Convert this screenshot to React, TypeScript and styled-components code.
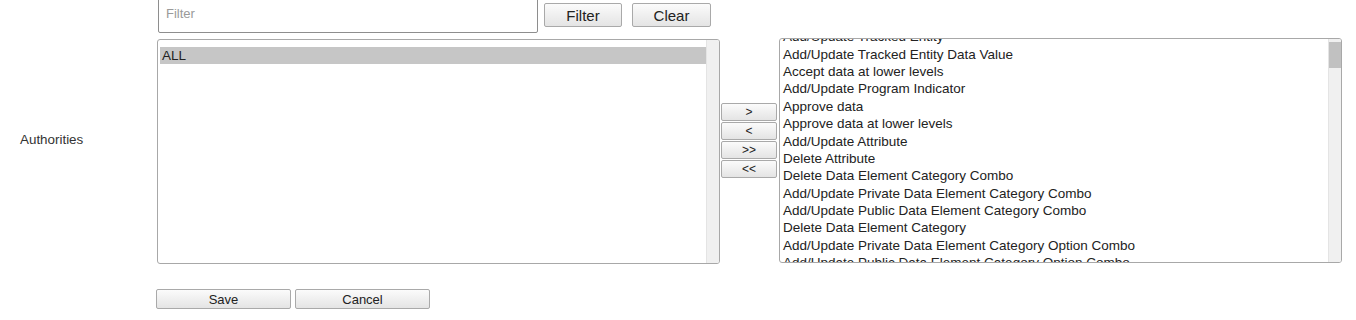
import React, { useLayoutEffect, useRef } from "react";
import styled, { createGlobalStyle } from "styled-components";

const Global = createGlobalStyle`
  html, body { margin: 0; padding: 0; background: #fff; }
  body { font-family: "Liberation Sans", Arial, sans-serif; color: #222; }
`;

const Page = styled.div`
  width: 1356px;
  height: 320px;
  overflow: hidden;
  display: grid;
  grid-template-columns: 157px 1fr;
  grid-template-rows: auto auto auto;
  align-content: start;
`;

const FilterRow = styled.div`
  grid-column: 2;
  display: flex;
  align-items: flex-start;
  margin-top: -4px;
  padding-left: 1px;
`;

const FilterInput = styled.input`
  box-sizing: border-box;
  width: 380px;
  height: 37px;
  border: 1px solid #8e8e8e;
  border-radius: 2px;
  padding: 0 7px 2px;
  font-family: "Liberation Sans", Arial, sans-serif;
  font-size: 13px;
  color: #222;
  outline: none;
  &::placeholder { color: #9a9a9a; }
`;

const GrayButton = styled.button<{ $w: number; $h: number; $fs: number }>`
  box-sizing: border-box;
  width: ${(p) => p.$w}px;
  height: ${(p) => p.$h}px;
  padding: 0;
  border: 1px solid #a9a9a9;
  border-radius: 2px;
  background: linear-gradient(#fbfbfb, #e4e4e4);
  font-family: "Liberation Sans", Arial, sans-serif;
  font-size: ${(p) => p.$fs}px;
  color: #222;
  line-height: 1;
  cursor: pointer;
`;

const TopButtons = styled.div`
  display: flex;
  gap: 10px;
  margin-left: 6px;
  margin-top: 7px;
`;

const Label = styled.div`
  grid-column: 1;
  display: flex;
  align-items: center;
  padding-left: 20px;
  padding-bottom: 19px;
  font-size: 13.4px;
  color: #333;
`;

const TransferRow = styled.div`
  grid-column: 2;
  display: flex;
  align-items: flex-start;
  margin-top: 5px;
`;

const ListBox = styled.div`
  box-sizing: border-box;
  width: 563px;
  height: 225px;
  border: 1px solid #a8a8a8;
  border-radius: 3px;
  display: flex;
  overflow: hidden;
  font-size: 13.5px;
  color: #222;
`;

const LeftBox = styled(ListBox)`
  margin-top: 1px;
`;

const RightBox = styled(ListBox)`
  margin-left: 2px;
`;

const Viewport = styled.div<{ $padTop: number; $padLeft: number }>`
  flex: 1;
  min-width: 0;
  overflow: hidden;
  padding: ${(p) => p.$padTop}px 0 0 ${(p) => p.$padLeft}px;
`;

const Track = styled.div`
  width: 12px;
  flex: none;
  background: #f0f0f0;
  border-left: 1px solid #e4e4e4;
  display: flex;
  flex-direction: column;
  padding-top: 3px;
`;

const Thumb = styled.div`
  height: 26px;
  background: #c1c1c1;
`;

const Item = styled.div<{ $selected?: boolean }>`
  height: 17.36px;
  line-height: 17.36px;
  padding-left: 2px;
  white-space: nowrap;
  overflow: hidden;
  background: ${(p) => (p.$selected ? "#c6c6c6" : "transparent")};
`;

const Arrows = styled.div`
  display: flex;
  flex-direction: column;
  gap: 1px;
  margin-left: 1px;
  margin-top: 65px;
`;

const ActionRow = styled.div`
  grid-column: 2;
  display: flex;
  gap: 4px;
  margin-top: 25px;
  margin-left: -1px;
`;

const visible = [
  "Add/Update Tracked Entity Instance",
  "Add/Update Tracked Entity",
  "Add/Update Tracked Entity Data Value",
  "Accept data at lower levels",
  "Add/Update Program Indicator",
  "Approve data",
  "Approve data at lower levels",
  "Add/Update Attribute",
  "Delete Attribute",
  "Delete Data Element Category Combo",
  "Add/Update Private Data Element Category Combo",
  "Add/Update Public Data Element Category Combo",
  "Delete Data Element Category",
  "Add/Update Private Data Element Category Option Combo",
  "Add/Update Public Data Element Category Option Combo",
];

const objects = [
  "Data Element Category Option",
  "Data Element",
  "Data Element Group",
  "Data Element Group Set",
  "Data Set",
  "Indicator",
  "Indicator Group",
  "Indicator Type",
  "Organisation Unit",
  "Organisation Unit Group",
];

const allItems = [
  ...visible,
  ...objects.flatMap((o) => [
    `Add/Update Private ${o}`,
    `Add/Update Public ${o}`,
    `Delete ${o}`,
  ]),
];

export default function App() {
  const rightRef = useRef<HTMLDivElement>(null);
  useLayoutEffect(() => {
    if (rightRef.current) rightRef.current.scrollTop = 28;
  }, []);

  return (
    <>
      <Global />
      <Page>
        <FilterRow>
          <FilterInput placeholder="Filter" />
          <TopButtons>
            <GrayButton $w={78} $h={24} $fs={15}>Filter</GrayButton>
            <GrayButton $w={79} $h={24} $fs={15}>Clear</GrayButton>
          </TopButtons>
        </FilterRow>

        <Label>Authorities</Label>
        <TransferRow>
          <LeftBox>
            <Viewport $padTop={7} $padLeft={2}>
              <Item $selected>ALL</Item>
            </Viewport>
            <Track />
          </LeftBox>
          <Arrows>
            <GrayButton $w={56} $h={18} $fs={12}>&gt;</GrayButton>
            <GrayButton $w={56} $h={18} $fs={12}>&lt;</GrayButton>
            <GrayButton $w={56} $h={18} $fs={12}>&gt;&gt;</GrayButton>
            <GrayButton $w={56} $h={18} $fs={12}>&lt;&lt;</GrayButton>
          </Arrows>
          <RightBox>
            <Viewport $padTop={0} $padLeft={1} ref={rightRef}>
              {allItems.map((t, i) => (
                <Item key={i}>{t}</Item>
              ))}
            </Viewport>
            <Track>
              <Thumb />
            </Track>
          </RightBox>
        </TransferRow>

        <ActionRow>
          <GrayButton $w={135} $h={20} $fs={13}>Save</GrayButton>
          <GrayButton $w={135} $h={20} $fs={13}>Cancel</GrayButton>
        </ActionRow>
      </Page>
    </>
  );
}
